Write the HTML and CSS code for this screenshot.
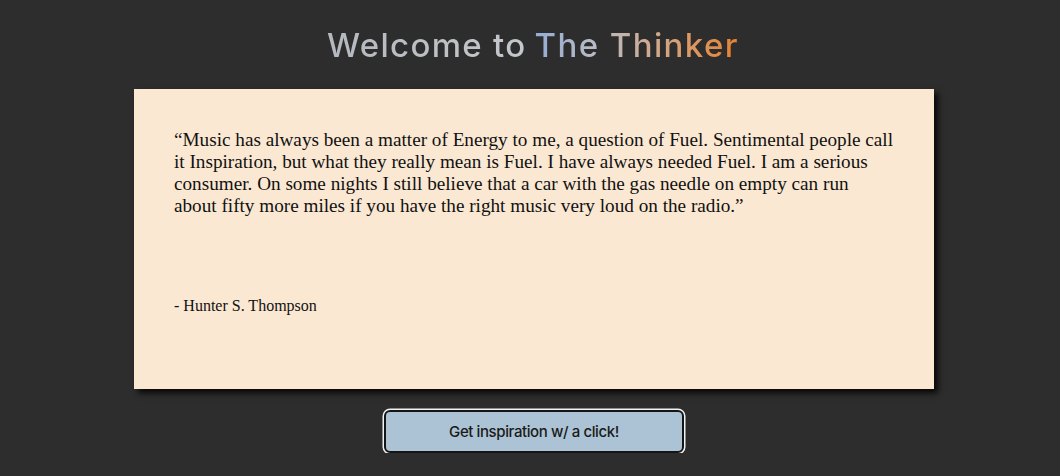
FILE: index.html
```html
<!DOCTYPE html>
<html lang="en">
<head>
<meta charset="utf-8">
<title>The Thinker</title>
<link rel="stylesheet" href="styles.css">
</head>
<body>
<main class="page">
  <h1 class="title"><span class="welcome">Welcome to</span> <span class="brand">The Thinker</span></h1>
  <section class="card">
    <p class="quote">“Music has always been a matter of Energy to me, a question of Fuel. Sentimental people call it Inspiration, but what they really mean is Fuel. I have always needed Fuel. I am a serious consumer. On some nights I still believe that a car with the gas needle on empty can run about fifty more miles if you have the right music very loud on the radio.”</p>
    <p class="author">- Hunter S. Thompson</p>
  </section>
  <button class="btn" type="button">Get inspiration w/ a click!</button>
</main>
</body>
</html>
```
FILE: styles.css
```css
html, body {
  margin: 0;
  padding: 0;
  background: #2d2d2d;
}
.page {
  display: flex;
  flex-direction: column;
  align-items: center;
  padding-top: 25px;
}
.title {
  margin: 0;
  font-family: Inter, "Open Sans", sans-serif;
  font-weight: 500;
  font-size: 33px;
  line-height: 40px;
  display: flex;
  gap: 8px;
  margin-left: 6px;
}
.welcome {
  letter-spacing: 1.3px;
  background: linear-gradient(90deg, #b4b9bf, #c4c7cb);
  -webkit-background-clip: text;
  background-clip: text;
  color: transparent;
}
.brand {
  letter-spacing: 1.4px;
  background: linear-gradient(90deg, #95acd4 0%, #b9bcc4 30%, #d2a88a 60%, #e8812e 100%);
  -webkit-background-clip: text;
  background-clip: text;
  color: transparent;
}
.card {
  box-sizing: border-box;
  width: 800px;
  height: 300px;
  margin-top: 24px;
  margin-left: 8px;
  padding: 40px 40px;
  background: #fbe8d3;
  box-shadow: 4px 4px 6px rgba(0, 0, 0, 0.85);
  font-family: "Liberation Serif", "Times New Roman", serif;
  color: #111;
  display: flex;
  flex-direction: column;
  gap: 80px;
}
.quote {
  margin: 0;
  font-size: 19.2px;
  line-height: 22px;
}
.author {
  margin: 0;
  font-size: 16px;
  line-height: 18px;
}
.btn {
  margin-top: 21px;
  margin-left: 8px;
  box-sizing: border-box;
  width: 300px;
  height: 43px;
  background: #abc3d4;
  border: 2px solid #151515;
  border-radius: 6px;
  box-shadow: 0 0 0 1.5px #f2f2f2;
  font-family: Inter, "Open Sans", sans-serif;
  font-size: 15px;
  font-weight: 500;
  letter-spacing: -0.4px;
  color: #1a1a1a;
  padding: 0;
}
```
